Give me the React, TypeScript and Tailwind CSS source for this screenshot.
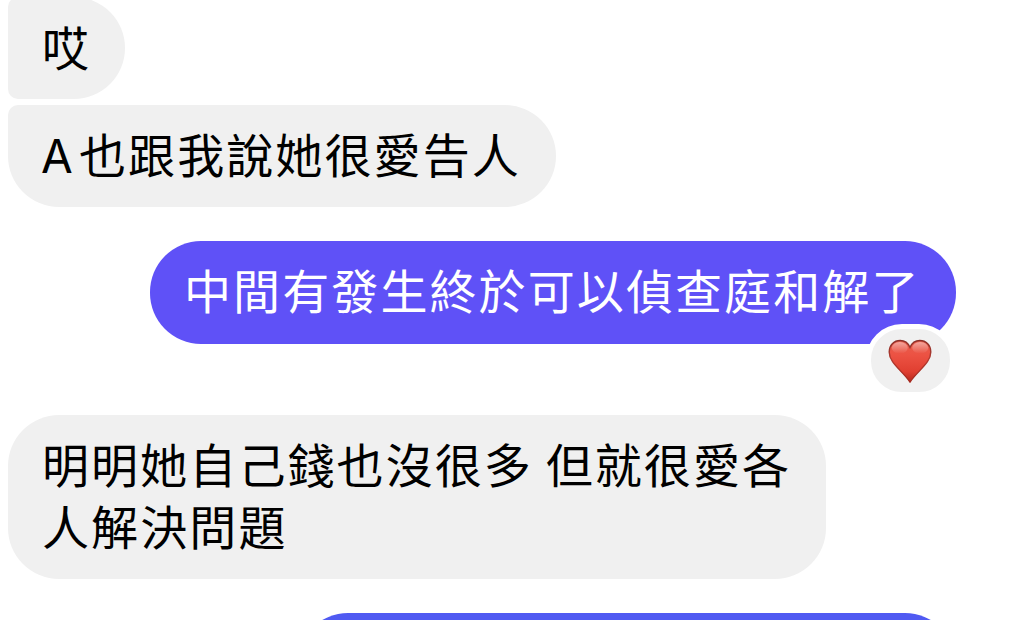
import clsx from "clsx";
import type { ReactNode } from "react";

type Message = {
  id: number;
  text: ReactNode;
  mine?: boolean;
  className: string;
  reaction?: boolean;
};

const messages: Message[] = [
  {
    id: 1,
    text: "哎",
    className: "-mt-[3px] h-[102px] w-[117px] rounded-l-[10px] rounded-r-[51px] pb-[5px]",
  },
  {
    id: 2,
    text: (
      <>
        <span className="-ml-px inline-block w-[38px] font-['Inter'] text-[46px]">A</span>也跟我說她很愛告人
      </>
    ),
    className: "mt-[6px] h-[102px] w-[548px] rounded-[51px] rounded-tl-[10px] pb-[4px]",
  },
  {
    id: 3,
    text: "中間有發生終於可以偵查庭和解了",
    mine: true,
    reaction: true,
    className: "mt-[34px] h-[102.5px] w-[806.5px] rounded-[51px] bg-[#5f51f7] pb-[6px]",
  },
  {
    id: 4,
    text: "明明她自己錢也沒很多 但就很愛各\n人解決問題",
    className: "mt-[71.5px] h-[164px] w-[818px] rounded-[51px] pb-[6px]",
  },
  {
    id: 5,
    text: null,
    mine: true,
    className: "mt-[34px] h-[102px] w-[659px] rounded-[51px] bg-[#505af2]",
  },
];

function Heart() {
  return (
    <svg viewBox="0 0 44 44" className="mr-[1px] h-[44px] w-[44px]">
      <defs>
        <linearGradient id="heart-fill" x1="0" y1="0" x2="0" y2="1">
          <stop offset="0" stopColor="#e8604f" />
          <stop offset="0.35" stopColor="#ec5243" />
          <stop offset="0.75" stopColor="#e03f31" />
          <stop offset="1" stopColor="#b5281c" />
        </linearGradient>
        <linearGradient id="heart-rim" x1="0" y1="0" x2="0" y2="1">
          <stop offset="0" stopColor="#8c3029" />
          <stop offset="0.45" stopColor="#b23a30" />
          <stop offset="1" stopColor="#a5281d" />
        </linearGradient>
        <linearGradient id="heart-shine" x1="0" y1="0" x2="0" y2="1">
          <stop offset="0" stopColor="#fff" stopOpacity="0.45" />
          <stop offset="1" stopColor="#fff" stopOpacity="0" />
        </linearGradient>
      </defs>
      <path
        d="M22 8.4C20.2 4.2 16.6 1.5 12.2 1.5C5.8 1.5 1.2 6.4 1.2 13C1.2 23.8 13.5 31 22 43C30.5 31 42.8 23.8 42.8 13C42.8 6.4 38.2 1.5 31.8 1.5C27.4 1.5 23.8 4.2 22 8.4Z"
        fill="url(#heart-fill)"
        stroke="url(#heart-rim)"
        strokeWidth="1.4"
      />
      <ellipse cx="11.8" cy="8.8" rx="8" ry="5.8" fill="url(#heart-shine)" />
      <ellipse cx="32.2" cy="8.8" rx="8" ry="5.8" fill="url(#heart-shine)" />
    </svg>
  );
}

function Bubble({ message }: { message: Message }) {
  return (
    <div
      className={clsx(
        "relative flex shrink-0 flex-col justify-center",
        message.mine ? "self-end pl-[34.5px] text-white" : "self-start bg-[#f0f0f0] pl-[34px] text-black",
        message.className
      )}
    >
      <p className="whitespace-pre text-[47px] leading-[62px] tracking-[2.1px]">{message.text}</p>

      {message.reaction && (
        <div className="absolute -bottom-[53.5px] right-[1px] flex h-[73px] w-[89px] items-center justify-center rounded-[36px] border-[5px] border-white bg-[#f0f0f0]">
          <Heart />
        </div>
      )}
    </div>
  );
}

export default function App() {
  return (
    <div
      lang="zh-Hant"
      className="flex h-[620px] w-[1024px] flex-col overflow-hidden bg-white pl-[8px] pr-[68px] font-['Noto_Sans_CJK_TC',sans-serif]"
    >
      {messages.map((message) => (
        <Bubble key={message.id} message={message} />
      ))}
    </div>
  );
}
